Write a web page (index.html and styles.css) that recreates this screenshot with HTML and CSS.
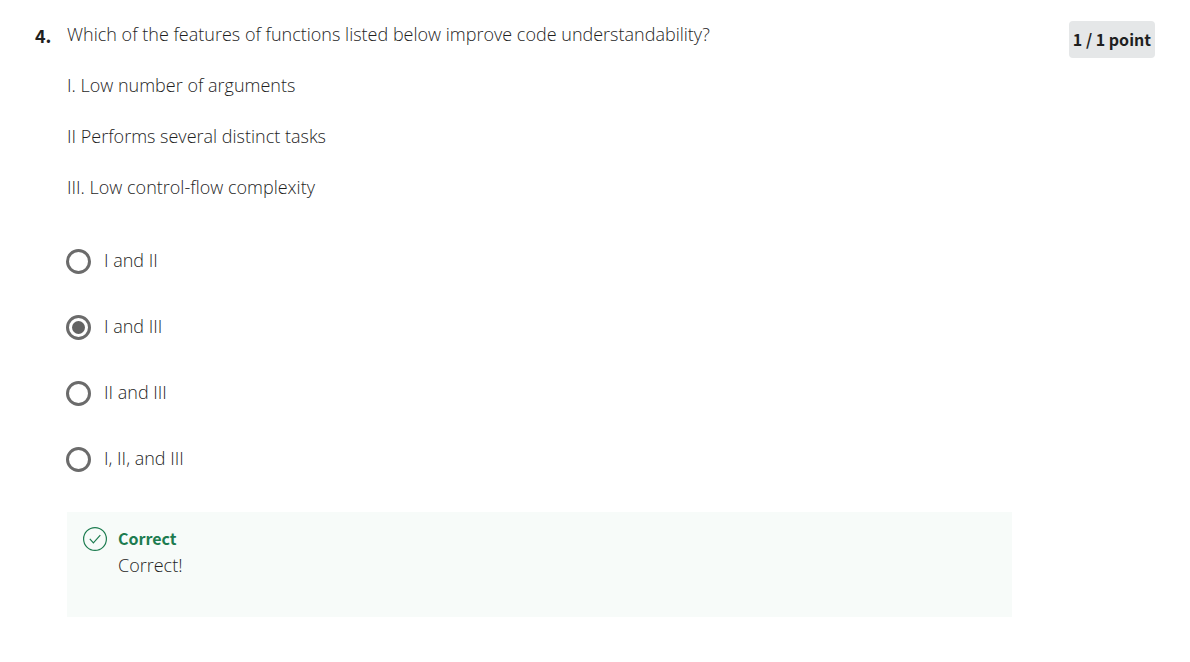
FILE: index.html
```html
<!DOCTYPE html>
<html lang="en">
<head>
<meta charset="utf-8">
<meta name="viewport" content="width=device-width, initial-scale=1">
<title>Quiz question 4</title>
<link rel="stylesheet" href="styles.css">
</head>
<body>
<main class="question">
  <span class="number">4.</span>
  <div class="content">
    <div class="prompt" id="prompt">
      <p>Which of the features of functions listed below improve code understandability?</p>
      <p>I. Low number of arguments</p>
      <p>II Performs several distinct tasks</p>
      <p>III. Low control-flow complexity</p>
    </div>
    <div class="options" role="radiogroup" aria-labelledby="prompt">
      <label class="option"><input class="radio" type="radio" name="answer"><span>I and II</span></label>
      <label class="option"><input class="radio" type="radio" name="answer" checked><span>I and III</span></label>
      <label class="option"><input class="radio" type="radio" name="answer"><span>II and III</span></label>
      <label class="option"><input class="radio" type="radio" name="answer"><span>I, II, and III</span></label>
    </div>
    <section class="feedback">
      <svg class="check" viewBox="0 0 24 24" aria-hidden="true"><circle cx="12" cy="12" r="11.4"/><path d="M6.8 11.8l3.6 4L17.3 8.2"/></svg>
      <div>
        <h2 class="verdict">Correct</h2>
        <p class="explanation">Correct!</p>
      </div>
    </section>
  </div>
  <span class="points">1 / 1 point</span>
</main>
</body>
</html>
```
FILE: styles.css
```css
* { box-sizing: border-box; }
body { margin: 0; background: #fff; color: #1f1f1f; font: 300 18px/27px "Open Sans", sans-serif; }
p, h2 { margin: 0; }
.question { display: flex; align-items: flex-start; padding: 21px 35px 0; }
.number { width: 32px; flex: none; padding-top: 1px; font: 700 18px/27px "Noto Sans CJK SC", sans-serif; }
.content { flex: 1; min-width: 0; margin-right: 57px; }
.prompt { display: grid; gap: 24px; }
.options { display: grid; gap: 39px; margin-top: 46px; }
.option { display: flex; align-items: flex-start; gap: 13px; }
.radio { appearance: none; display: grid; place-items: center; flex: none; width: 25px; height: 25px; margin: 2px 0 0 -1px; border: 3px solid #6b6b6b; border-radius: 50%; background: #fff; }
.radio:checked::before { content: ""; width: 13px; height: 13px; border-radius: 50%; background: #636363; }
.feedback { display: flex; gap: 11px; min-height: 105px; margin-top: 40px; padding: 13px 16px; background: #f7fbf9; }
.check { flex: none; width: 24px; height: 24px; margin-top: 2px; fill: none; stroke: #1d7c50; stroke-width: 1.2; }
.verdict { color: #1d7c50; font: 700 16px/27px "Noto Sans CJK SC", sans-serif; }
.points { flex: none; padding: 5px 4px; border-radius: 4px; background: #e5e7e8; font: 700 16px/27px "Noto Sans CJK SC", sans-serif; }
```
